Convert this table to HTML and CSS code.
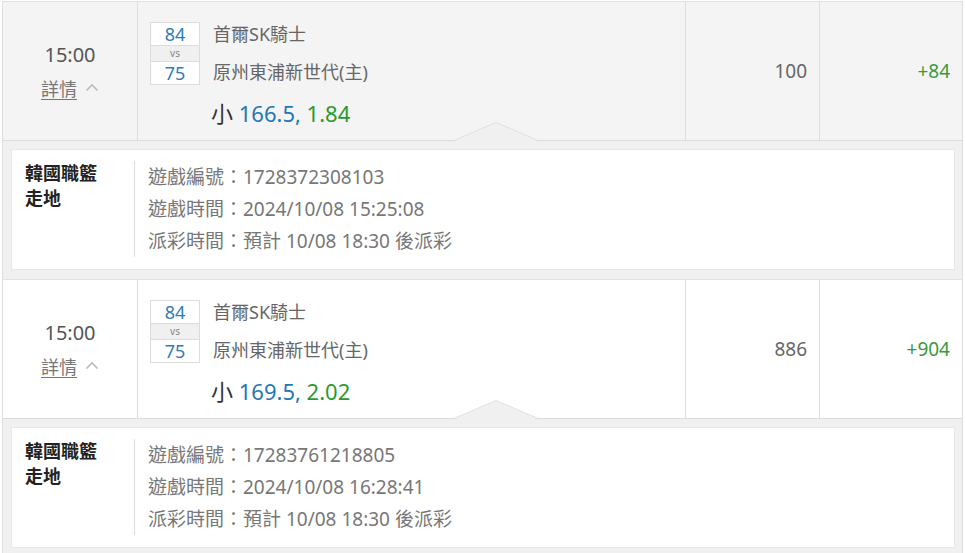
FILE: index.html
```html
<!DOCTYPE html>
<html lang="zh-Hant">
<head>
  <meta charset="UTF-8">
  <meta name="viewport" content="width=device-width, initial-scale=1.0">
  <title>注單紀錄</title>
  <link rel="stylesheet" href="styles.css">
</head>
<body>

  <div class="bet-list">

    <!-- bet 1 -->
    <div class="bet-row bet-row--open">
      <div class="cell cell-time">
        <div class="time">15:00</div>
        <a class="detail-link" href="#">詳情 <svg class="chevron" width="14" height="9" viewBox="0 0 14 9"><polyline points="1.5,7.5 7,2 12.5,7.5" /></svg></a>
      </div>
      <div class="cell cell-match">
        <div class="match">
          <div class="score-box">
            <div class="score">84</div>
            <div class="vs">vs</div>
            <div class="score">75</div>
          </div>
          <div class="teams">
            <div class="team">首爾SK騎士</div>
            <div class="team">原州東浦新世代(主)</div>
          </div>
        </div>
        <div class="pick">小 <span class="line">166.5,</span> <span class="odds">1.84</span></div>
        <svg class="pointer" width="84" height="19" viewBox="0 0 84 19"><polygon points="0,19 42,1 84,19" /><polyline points="0,18.5 42,0.5 84,18.5" /></svg>
      </div>
      <div class="cell cell-stake">100</div>
      <div class="cell cell-win">+84</div>
    </div>

    <div class="bet-detail">
      <div class="detail-box">
        <div class="league">韓國職籃<br>走地</div>
        <div class="info">
          <div>遊戲編號：1728372308103</div>
          <div>遊戲時間：2024/10/08 15:25:08</div>
          <div>派彩時間：預計 10/08 18:30 後派彩</div>
        </div>
      </div>
    </div>

    <!-- bet 2 -->
    <div class="bet-row">
      <div class="cell cell-time">
        <div class="time">15:00</div>
        <a class="detail-link" href="#">詳情 <svg class="chevron" width="14" height="9" viewBox="0 0 14 9"><polyline points="1.5,7.5 7,2 12.5,7.5" /></svg></a>
      </div>
      <div class="cell cell-match">
        <div class="match">
          <div class="score-box">
            <div class="score">84</div>
            <div class="vs">vs</div>
            <div class="score">75</div>
          </div>
          <div class="teams">
            <div class="team">首爾SK騎士</div>
            <div class="team">原州東浦新世代(主)</div>
          </div>
        </div>
        <div class="pick">小 <span class="line">169.5,</span> <span class="odds">2.02</span></div>
        <svg class="pointer" width="84" height="19" viewBox="0 0 84 19"><polygon points="0,19 42,1 84,19" /><polyline points="0,18.5 42,0.5 84,18.5" /></svg>
      </div>
      <div class="cell cell-stake">886</div>
      <div class="cell cell-win">+904</div>
    </div>

    <div class="bet-detail">
      <div class="detail-box">
        <div class="league">韓國職籃<br>走地</div>
        <div class="info">
          <div>遊戲編號：17283761218805</div>
          <div>遊戲時間：2024/10/08 16:28:41</div>
          <div>派彩時間：預計 10/08 18:30 後派彩</div>
        </div>
      </div>
    </div>

  </div>

</body>
</html>
```

FILE: styles.css
```css
body {
  margin: 0;
  background-color: #ffffff;
  font-family: "Noto Sans", "Noto Sans CJK TC", sans-serif;
  color: #666;
  overflow: hidden;
}

.bet-list {
  margin: 1px 2px 0 2px;
  border-top: 1px solid #e0e0e0;
  border-left: 1px solid #dedede;
  border-right: 1px solid #dedede;
}

.bet-row {
  display: grid;
  grid-template-columns: 134px 548px 134px 1fr;
  height: 138px;
  background-color: #ffffff;
  border-bottom: 1px solid #dcdcdc;
}

.bet-row--open {
  background-color: #f4f4f4;
}

.cell {
  border-left: 1px solid #dedede;
  box-sizing: border-box;
}

.cell:first-child {
  border-left: none;
}

.cell-time {
  display: flex;
  flex-direction: column;
  align-items: center;
  padding-top: 39px;
}

.time {
  font-size: 20px;
  line-height: 28px;
  color: #555;
}

.detail-link {
  margin-top: 8px;
  font-size: 18px;
  line-height: 24px;
  color: #777;
  text-decoration: underline;
  text-underline-offset: 3px;
  display: flex;
  align-items: center;
}

.chevron {
  margin-left: 8px;
  margin-bottom: 4px;
  fill: none;
  stroke: #bbb;
  stroke-width: 1.6;
}

.cell-match {
  position: relative;
  padding: 20px 0 0 12px;
}

.match {
  display: flex;
  align-items: flex-start;
}

.score-box {
  width: 48px;
  border: 1px solid #dcdcdc;
  text-align: center;
  background-color: #ffffff;
}

.score {
  font-size: 18px;
  line-height: 22px;
  color: #2f7cb5;
}

.vs {
  font-size: 10px;
  line-height: 15px;
  color: #888;
  background-color: #f0f0f0;
  border-top: 1px solid #dcdcdc;
  border-bottom: 1px solid #dcdcdc;
}

.teams {
  margin-left: 13px;
}

.team {
  font-size: 18px;
  line-height: 24px;
  color: #666;
}

.team + .team {
  margin-top: 14px;
}

.pick {
  margin: 14px 0 0 61px;
  font-size: 22px;
  line-height: 28px;
  color: #333;
}

.line {
  color: #1f78b4;
}

.odds {
  color: #2b9a2b;
}

.pointer {
  position: absolute;
  left: 316px;
  bottom: -1px;
}

.pointer polygon {
  fill: #f0f0f0;
}

.pointer polyline {
  fill: none;
  stroke: #dedede;
  stroke-width: 1;
}

.cell-stake,
.cell-win {
  display: flex;
  align-items: center;
  justify-content: flex-end;
  font-size: 19px;
}

.cell-stake {
  padding-right: 12px;
  color: #666;
}

.cell-win {
  padding-right: 12px;
  color: #3a9a3a;
}

.bet-detail {
  background-color: #f0f0f0;
  padding: 8px 7px 9px 8px;
  border-bottom: 1px solid #e2e2e2;
}

.detail-box {
  display: flex;
  align-items: flex-start;
  background-color: #ffffff;
  border: 1px solid #e8e8e8;
  padding: 11px 0 12px 13px;
}

.league {
  width: 109px;
  font-size: 18px;
  line-height: 25px;
  font-weight: bold;
  color: #222;
}

.info {
  border-left: 1px solid #dedede;
  padding-left: 13px;
  font-size: 19px;
  line-height: 32px;
  color: #777;
}
```
